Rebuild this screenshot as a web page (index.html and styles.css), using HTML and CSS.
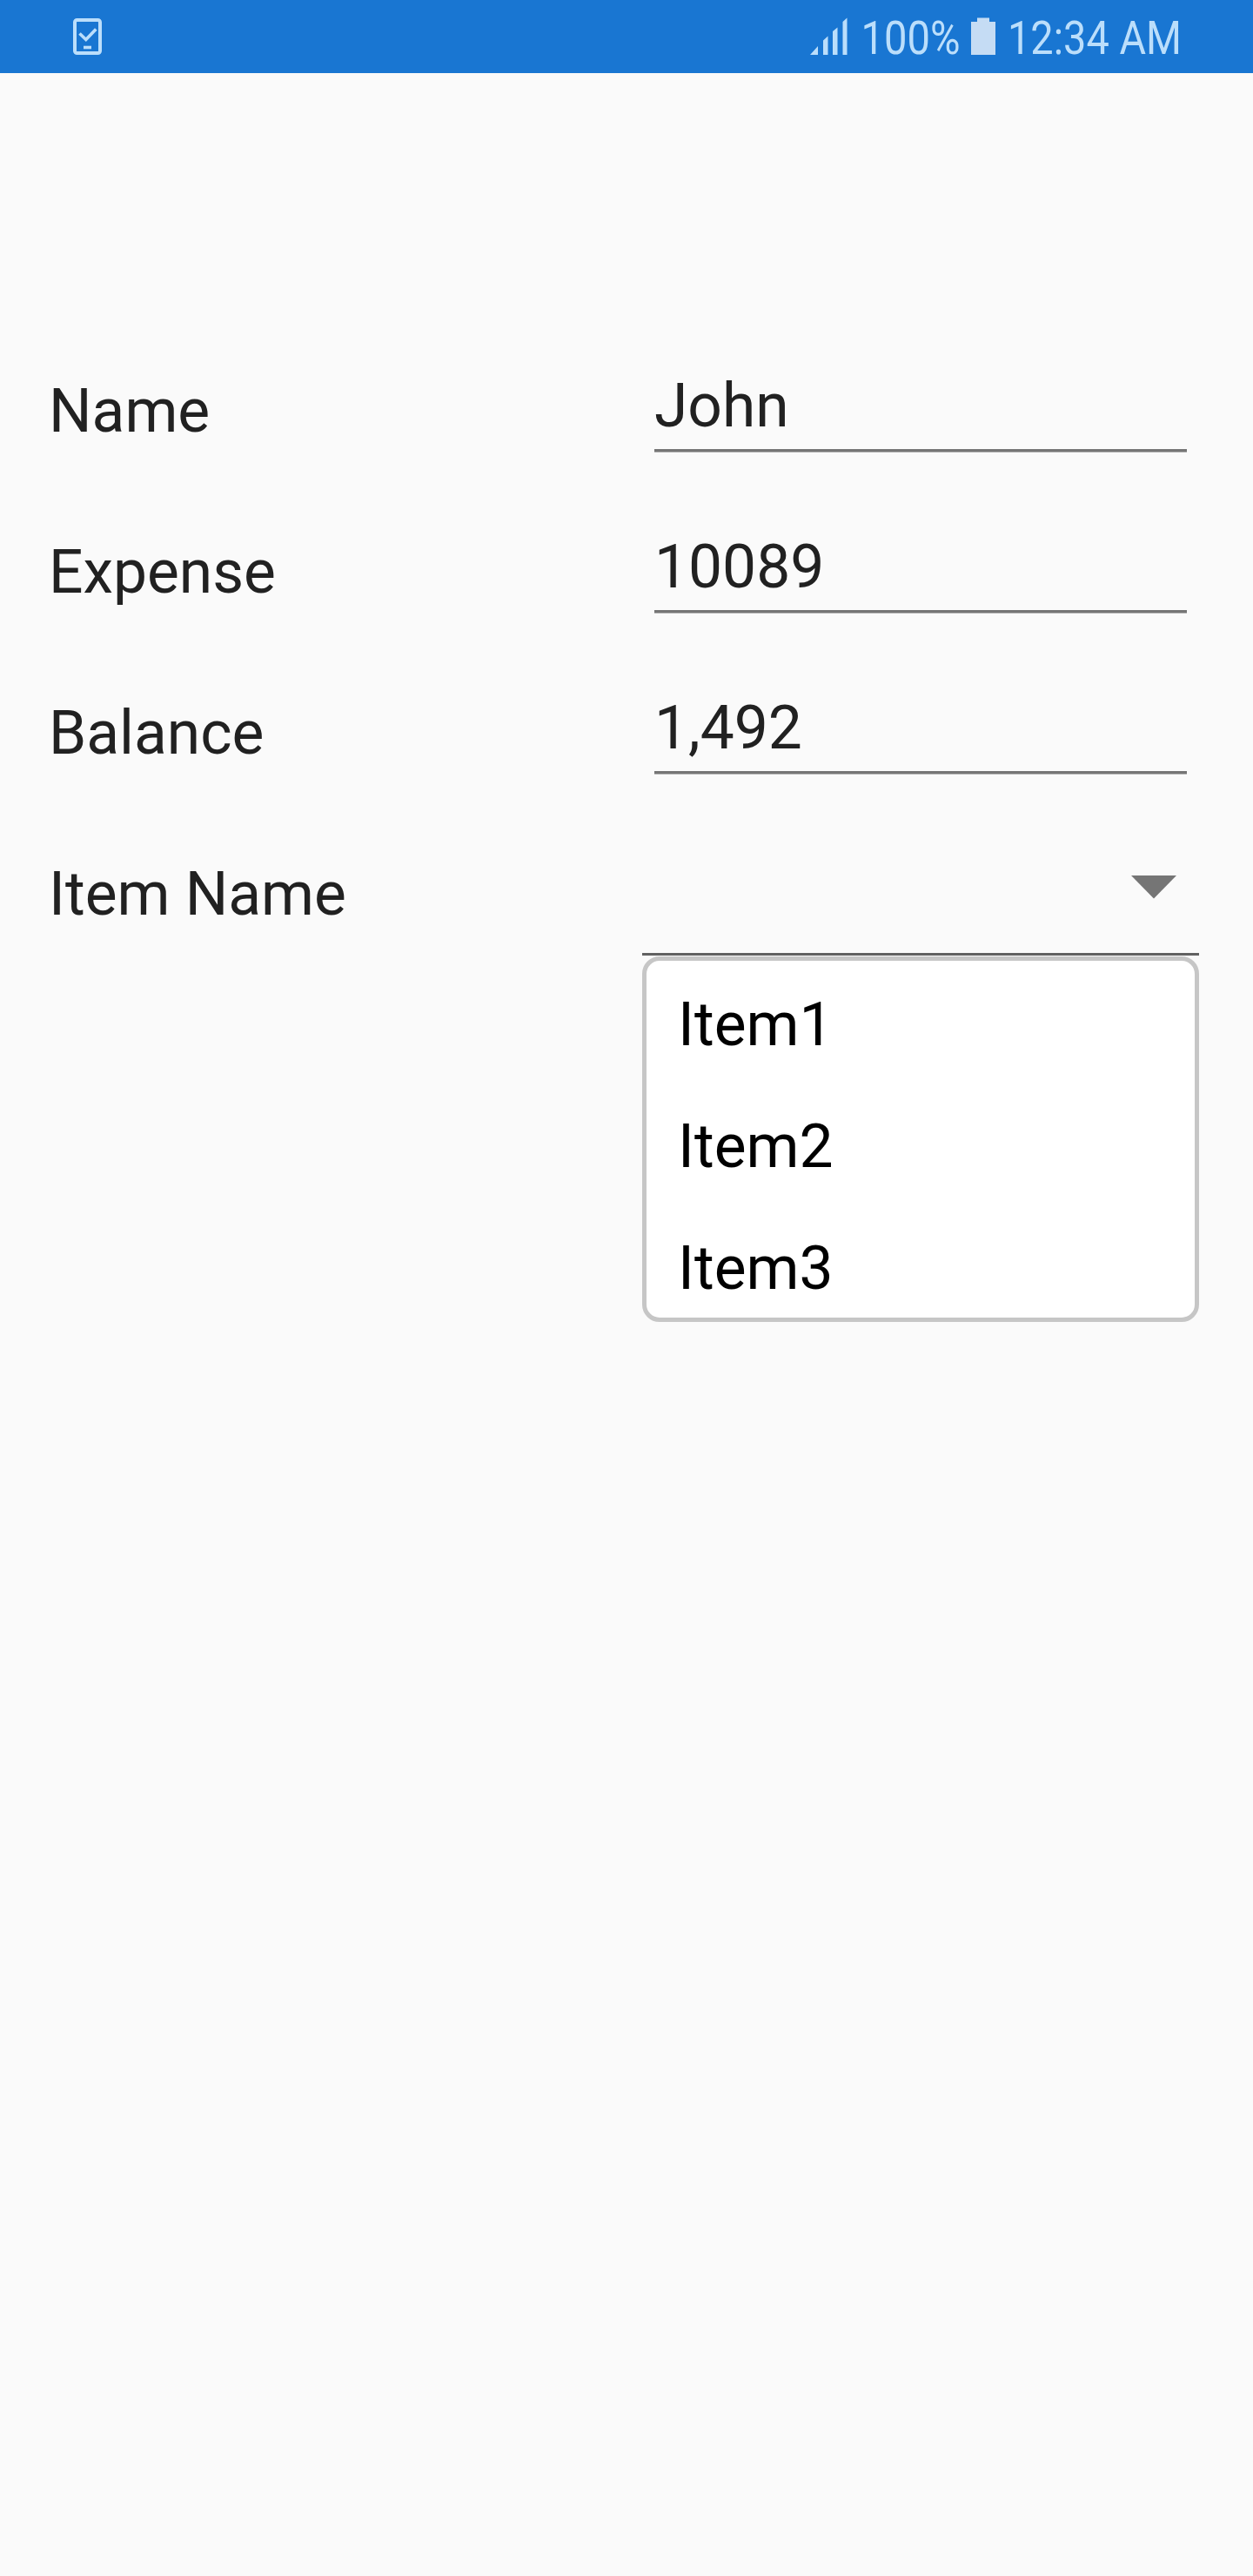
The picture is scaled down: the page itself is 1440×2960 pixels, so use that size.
FILE: index.html
```html
<!DOCTYPE html>
<html lang="en">
<head>
<meta charset="utf-8">
<title>Expense form</title>
<link rel="stylesheet" href="styles.css">
</head>
<body>
<header class="status-bar">
  <svg class="task-icon" width="34" height="42" viewBox="0 0 34 42" fill="none" stroke="currentColor">
    <rect x="2" y="2" width="29" height="38" rx="2.5" stroke-width="4"/>
    <path d="M7.500 17.500l7.300 7 11.500-12" stroke-width="3.6"/>
    <path d="M12 33.500h9" stroke-width="3.6"/>
  </svg>
  <svg class="status-info" width="510" height="84" viewBox="930 0 510 84" fill="currentColor">
    <path d="M931 63L940 53V63ZM946 63V46.500L951.500 41.500V63ZM957 63V36L962.500 31.500V63ZM968.500 63V25L973.500 20.500V63Z"/>
    <text x="989.500" y="62.300" textLength="114" lengthAdjust="spacingAndGlyphs">100%</text>
    <path class="battery" d="M1116 25H1123V20.500H1137V25H1144V63H1116Z"/>
    <text x="1158" y="62.300" textLength="200" lengthAdjust="spacingAndGlyphs">12:34 AM</text>
  </svg>
</header>
<main class="form">
  <div class="row"><span class="label">Name</span><div class="field">John</div></div>
  <div class="row"><span class="label">Expense</span><div class="field">10089</div></div>
  <div class="row"><span class="label">Balance</span><div class="field">1,492</div></div>
  <div class="row">
    <span class="label">Item Name</span>
    <div class="select">
      <svg class="arrow" width="52" height="27" viewBox="0 0 52 27"><path d="M0 0H52L26 26.500Z" fill="currentColor"/></svg>
      <ul class="menu">
        <li>Item1</li>
        <li>Item2</li>
        <li>Item3</li>
      </ul>
    </div>
  </div>
</main>
</body>
</html>
```
FILE: styles.css
```css
* { box-sizing: border-box; }

body {
  margin: 0;
  min-height: 2960px;
  background: #fafafa;
  color: #212121;
  font-family: Roboto, sans-serif;
  font-size: 69.5px;
}

.status-bar {
  display: flex;
  align-items: center;
  justify-content: space-between;
  height: 84px;
  padding-left: 84px;
  background: #1976d2;
  color: #bbdefb;
}

.status-info {
  font-size: 54px;
}

.battery {
  fill: #c5dcf4;
}

.form {
  padding: 296px 62px 0 56px;
}

.row {
  display: grid;
  grid-template-columns: 682px 640px;
  height: 185px;
}

.label {
  line-height: 185px;
}

.field {
  height: 139px;
  margin: 0 14px;
  padding-top: 46px;
  border-bottom: 3px solid #757575;
  box-shadow: 0 1px #b4b4b4;
  line-height: 82px;
}

.select {
  position: relative;
  display: flex;
  justify-content: flex-end;
  height: 163px;
  padding: 71px 26px 0 0;
  border-bottom: 3px solid #616161;
}

.arrow {
  color: #757575;
}

.menu {
  position: absolute;
  top: 164px;
  left: 0;
  width: 640px;
  height: 420px;
  margin: 0;
  padding: 4px 0 0 36px;
  overflow: hidden;
  list-style: none;
  background: #fff;
  border: 5px solid #c6c6c6;
  border-radius: 20px;
  color: #000;
}

.menu li {
  height: 140px;
  line-height: 140px;
}
```
